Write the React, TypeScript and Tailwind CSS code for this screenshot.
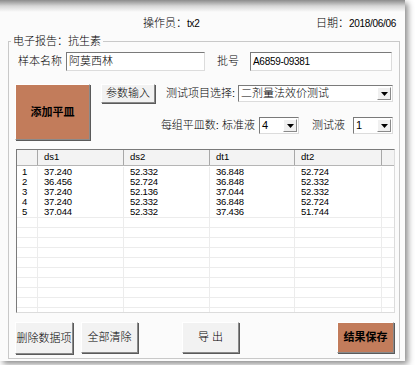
import React from 'react';

type Row = { ds1: string; ds2: string; dt1: string; dt2: string };

const rows: Row[] = [
  { ds1: '37.240', ds2: '52.332', dt1: '36.848', dt2: '52.724' },
  { ds1: '36.456', ds2: '52.724', dt1: '36.848', dt2: '52.332' },
  { ds1: '37.240', ds2: '52.136', dt1: '37.044', dt2: '52.332' },
  { ds1: '37.240', ds2: '52.332', dt1: '36.848', dt2: '52.724' },
  { ds1: '37.044', ds2: '52.332', dt1: '37.436', dt2: '51.744' },
];

const cols = 'grid grid-cols-[21px_86px_86px_85px_87px_1fr]';
const sunken = 'border border-t-[#7a7a7a] border-l-[#7a7a7a] border-r-[#dcdcdc] border-b-[#dcdcdc] bg-white';
const raised = 'border border-t-[#ffffff] border-l-[#ffffff] border-r-[#8a8a8a] border-b-[#8a8a8a] shadow-[1px_1px_0_#5a5a5a]';

const Latin: React.FC<{ children: React.ReactNode }> = ({ children }) => (
  <span className="text-[10px] font-normal tracking-[-0.3px]">{children}</span>
);

const Cell: React.FC<{ children?: React.ReactNode; pad?: string }> = ({ children, pad = 'pl-[6px]' }) => (
  <div className={`${pad} border-r border-[#ececec] text-[9.5px] font-normal tracking-[-0.2px] leading-[10px]`}>{children}</div>
);

const Select: React.FC<{ value: string; width: string }> = ({ value, width }) => (
  <div className={`${sunken} ${width} h-[17px] flex items-center`}>
    <span className="flex-1 pl-[2px] text-[11px] leading-[13px] truncate">{value}</span>
    <div className="w-[14px] h-[13px] mr-[1px] bg-[#f0f0f0] border border-t-white border-l-white border-r-[#8a8a8a] border-b-[#8a8a8a] flex items-center justify-center">
      <svg width="7" height="4" viewBox="0 0 7 4">
        <path d="M0 0h7L3.5 4z" fill="#000" />
      </svg>
    </div>
  </div>
);

const Button: React.FC<{ label: string; className: string; brown?: boolean }> = ({ label, className, brown }) => (
  <button
    className={`${className} ${raised} flex items-center justify-center text-[11px] ${
      brown ? 'bg-[#c27c5b] font-bold' : 'bg-[#f2f2f2]'
    }`}
  >
    {label}
  </button>
);

const DataTable: React.FC = () => {
  const empty = Array.from({ length: 10 });
  return (
    <div className={`${sunken} ml-[7px] mt-[9px] w-[379px] h-[164px] overflow-hidden`}>
      <div className={`${cols} h-[16px] bg-[#f3f3f3] border-b border-[#b5b5b5]`}>
        {['', 'ds1', 'ds2', 'dt1', 'dt2', ''].map((h, i) => (
          <div
            key={i}
            className={`pl-[6px] flex items-center text-[9.5px] font-normal ${i < 5 ? 'border-r border-[#a8a8a8]' : ''}`}
          >
            {h}
          </div>
        ))}
      </div>
      <div className="h-[1px]" />
      {rows.map((r, i) => (
        <div key={i} className={`${cols} h-[10px]`}>
          <Cell pad="pl-[5px]">{i + 1}</Cell>
          <Cell>{r.ds1}</Cell>
          <Cell>{r.ds2}</Cell>
          <Cell>{r.dt1}</Cell>
          <Cell>{r.dt2}</Cell>
          <div />
        </div>
      ))}
      <div className="border-b border-[#ececec] h-[1px]" />
      {empty.map((_, i) => (
        <div key={i} className={`${cols} h-[10px] border-b border-[#ececec]`}>
          <Cell />
          <Cell />
          <Cell />
          <Cell />
          <Cell />
          <div />
        </div>
      ))}
    </div>
  );
};

export default function App() {
  return (
    <div className="w-[416px] h-[365px] bg-white overflow-hidden font-['Liberation_Sans','Noto_Sans_CJK_SC',sans-serif] font-light text-black">
      <div className="w-[405px] h-[361px] bg-[#fbfbfb] shadow-[3px_3px_6px_rgba(0,0,0,0.45)] flex flex-col">
        <div className="h-[12px] bg-gradient-to-b from-[#8c8c8c] via-[#d6d6d6] to-[#fbfbfb]" />

        <div className="h-[22px] flex items-center text-[11px]">
          <span className="ml-[143px]">操作员：<Latin>tx2</Latin></span>
          <span className="ml-auto mr-[9px]">日期：<Latin>2018/06/06</Latin></span>
        </div>

        <fieldset className="ml-[8px] w-[392px] h-[325px] border border-[#c9c9c9]">
          <legend className="ml-[2px] px-[2px] text-[11px] leading-[14px]">电子报告：抗生素</legend>
          <div className="flex flex-col">
            <div className="mt-[4px] flex items-center text-[11px]">
              <span className="ml-[9px]">样本名称</span>
              <div className={`${sunken} ml-[4px] w-[139px] h-[19px] flex items-center pl-[2px]`}>阿莫西林</div>
              <span className="ml-[12px]">批号</span>
              <div className={`${sunken} ml-[11px] w-[142px] h-[19px] flex items-center pl-[2px]`}>
                <Latin>A6859-09381</Latin>
              </div>
            </div>

            <div className="mt-[13px] flex">
              <Button label="添加平皿" brown className="ml-[6px] w-[75px] h-[56px]" />
              <div className="ml-[11px] w-[292px] flex flex-col text-[11px]">
                <div className="flex items-center">
                  <Button label="参数输入" className="w-[54px] h-[19px]" />
                  <span className="ml-[11px]">测试项目选择:</span>
                  <div className="ml-auto">
                    <Select value="二剂量法效价测试" width="w-[155px]" />
                  </div>
                </div>
                <div className="mt-[14px] flex items-center justify-end">
                  <span>每组平皿数: 标准液</span>
                  <div className="ml-[4px]"><Select value="4" width="w-[40px]" /></div>
                  <span className="ml-[13px]">测试液</span>
                  <div className="ml-[8px]"><Select value="1" width="w-[40px]" /></div>
                </div>
              </div>
            </div>

            <DataTable />

            <div className="mt-[9px] flex">
              <Button label="删除数据项" className="ml-[6px] w-[58px] h-[32px]" />
              <Button label="全部清除" className="ml-[8px] w-[57px] h-[31px]" />
              <Button label="导 出" className="ml-[44px] w-[57px] h-[31px]" />
              <Button label="结果保存" brown className="ml-auto mr-[5px] w-[57px] h-[31px]" />
            </div>
          </div>
        </fieldset>
      </div>
    </div>
  );
}
